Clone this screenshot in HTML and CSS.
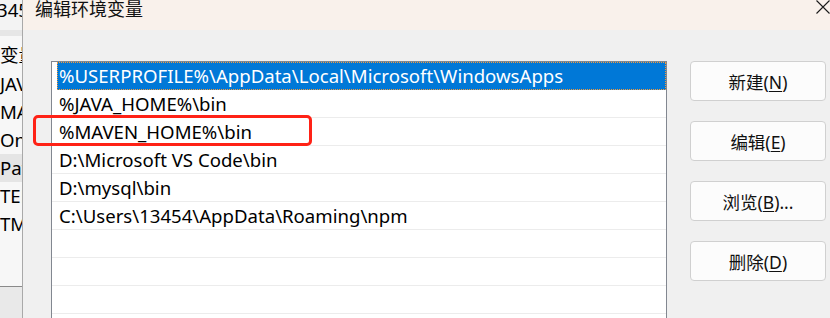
FILE: index.html
```html
<!DOCTYPE html>
<html lang="zh-CN">
<head>
  <meta charset="UTF-8">
  <meta name="viewport" content="width=device-width, initial-scale=1.0">
  <title>编辑环境变量</title>
  <link rel="stylesheet" href="styles.css">
</head>
<body>
  <!-- window behind the dialog, only a sliver shows -->
  <div class="bg-window">
    <div class="bg-top">345</div>
    <div class="bg-label">变量</div>
    <ul class="bg-list">
      <li>JAVA_HOME</li>
      <li>MAVEN_HOME</li>
      <li>OneDrive</li>
      <li class="active">Path</li>
      <li>TEMP</li>
      <li>TMP</li>
    </ul>
    <div class="bg-bottom"></div>
  </div>

  <div class="dialog">
    <div class="titlebar">
      <span class="title">编辑环境变量</span>
      <svg class="close" width="14" height="14" viewBox="0 0 14 14">
        <path d="M0.5 0.5 L13.5 13.5 M13.5 0.5 L0.5 13.5" stroke="#1a1a1a" stroke-width="1.1" fill="none"/>
      </svg>
    </div>

    <div class="dialog-body">
      <ul class="path-list">
        <li class="selected">%USERPROFILE%\AppData\Local\Microsoft\WindowsApps</li>
        <li>%JAVA_HOME%\bin</li>
        <li>%MAVEN_HOME%\bin</li>
        <li>D:\Microsoft VS Code\bin</li>
        <li>D:\mysql\bin</li>
        <li>C:\Users\13454\AppData\Roaming\npm</li>
        <li></li>
        <li></li>
        <li></li>
      </ul>

      <div class="buttons">
        <button class="btn">新建(<u>N</u>)</button>
        <button class="btn">编辑(<u>E</u>)</button>
        <button class="btn">浏览(<u>B</u>)...</button>
        <button class="btn">删除(<u>D</u>)</button>
      </div>
    </div>

    <!-- annotation drawn over the screenshot -->
    <div class="highlight"></div>
  </div>
</body>
</html>
```

FILE: styles.css
```css
/* Base styles */
* {
  margin: 0;
  padding: 0;
  box-sizing: border-box;
  font-family: 'Noto Sans', 'Noto Sans CJK SC', sans-serif;
}

body {
  width: 830px;
  height: 318px;
  overflow: hidden;
  display: flex;
  background-color: #f0f0f0;
  color: #000;
  font-size: 18.6px;
}

ul {
  list-style: none;
}

/* Window behind */
.bg-window {
  width: 23px;
  flex-shrink: 0;
  display: flex;
  flex-direction: column;
  background-color: #f7f7f7;
  border-right: 1px solid #a9a9a9;
  overflow: hidden;
  white-space: nowrap;
}

.bg-top {
  height: 30px;
  flex-shrink: 0;
  line-height: 20px;
  text-indent: -3px;
  background-color: #f3f3f3;
}

.bg-label {
  height: 40px;
  flex-shrink: 0;
  line-height: 20px;
  border-top: 6px solid #e6e6e6;
  padding-top: 9px;
}

.bg-list {
  flex-shrink: 0;
}

.bg-list li {
  height: 28px;
  line-height: 28px;
}

.bg-list li.active {
  background-color: #e5e5e5;
}

.bg-bottom {
  margin-top: 48px;
  flex: 1;
  border-top: 1px solid #8a8a8a;
  background-color: #e9e9e9;
}

/* Dialog */
.dialog {
  flex: 1;
  display: flex;
  flex-direction: column;
  position: relative;
  min-height: 0;
}

.titlebar {
  height: 30px;
  flex-shrink: 0;
  display: flex;
  justify-content: space-between;
  align-items: flex-start;
  background-color: #f9f1eb;
  padding-left: 12px;
}

.title {
  font-size: 18px;
  line-height: 18px;
  color: #111;
}

.close {
  display: block;
}

.dialog-body {
  flex: 1;
  min-height: 0;
  display: flex;
  align-items: flex-start;
  padding: 31px 0 0 28px;
}

.path-list {
  width: 616px;
  height: 260px;
  flex-shrink: 0;
  background-color: #fff;
  border: 1px solid #828790;
  border-bottom: none;
  white-space: nowrap;
}

.path-list li {
  height: 28px;
  line-height: 27px;
  padding-left: 7px;
  border-bottom: 1px solid #ececec;
}

.path-list li.selected {
  margin-left: 5px;
  padding-left: 2px;
  background-color: #0078d7;
  color: #fff;
  border-bottom: none;
  outline: 1px dotted #f59a3a;
  outline-offset: -1px;
}

.buttons {
  display: flex;
  flex-direction: column;
  gap: 20px;
  margin-left: 23px;
  width: 136px;
}

.btn {
  height: 40px;
  border: 1px solid #d0d0d0;
  border-radius: 4px;
  background-color: #fcfcfc;
  font-size: 17.5px;
  color: #111;
  text-align: center;
}

.btn u {
  text-underline-offset: 2px;
}

.highlight {
  position: absolute;
  left: 10px;
  top: 115px;
  width: 279px;
  height: 31px;
  border: 3px solid #ff2216;
  border-radius: 5px;
}
```
